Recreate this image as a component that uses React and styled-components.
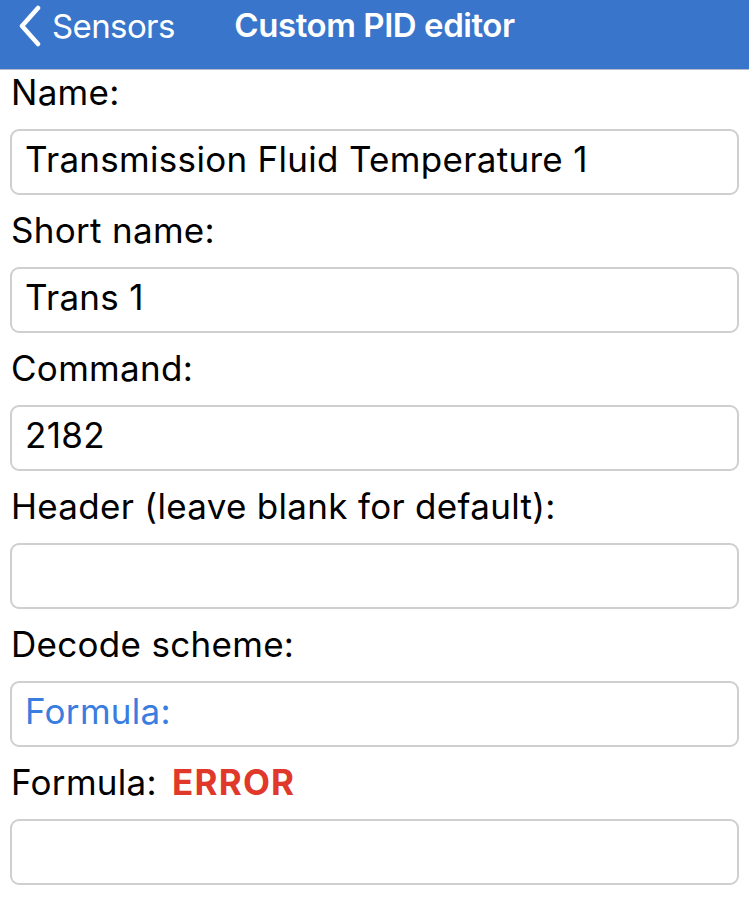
import React from "react";
import styled, { createGlobalStyle } from "styled-components";

const Global = createGlobalStyle`
  html, body { margin: 0; padding: 0; background: #ffffff; }
  body { font-family: Inter, "Noto Sans", sans-serif; -webkit-font-smoothing: antialiased; }
  * { box-sizing: border-box; }
`;

const Page = styled.div`
  width: 749px;
  min-height: 901px;
  background: #ffffff;
`;

const NavBar = styled.header`
  height: 70px;
  background: #3a75cc;
  border-bottom: 1px solid #b4bccb;
  display: grid;
  grid-template-columns: 1fr auto 1fr;
  align-items: start;
  padding-top: 5px;
  color: #ffffff;
`;

const Back = styled.div`
  display: flex;
  align-items: center;
  gap: 9px;
  padding-left: 17px;
  font-size: 33px;
  line-height: 41px;
  font-weight: 400;
  letter-spacing: -0.6px;
`;

const Chevron = styled.svg`
  width: 26px;
  height: 42px;
  display: block;
`;

const Title = styled.h1`
  margin: 0;
  font-size: 33px;
  line-height: 41px;
  font-weight: 600;
  letter-spacing: -0.45px;
`;

const Form = styled.div`
  display: flex;
  flex-direction: column;
  gap: 15px;
  padding: 2px 10px 0 10px;
`;

const Field = styled.div`
  display: flex;
  flex-direction: column;
  gap: 16px;
`;

const Label = styled.label`
  display: block;
  padding-left: 1px;
  font-size: 35px;
  line-height: 41px;
  color: #000000;
  letter-spacing: 0.3px;
  white-space: pre;
`;

const ErrorTag = styled.span`
  color: #e0392b;
  font-weight: 700;
  margin-left: 5px;
  letter-spacing: 1.2px;
`;

const Box = styled.div`
  width: 729px;
  height: 66px;
  border: 2px solid #cfcfcf;
  border-radius: 9px;
  padding: 8px 14px 0 13px;
  font-size: 35px;
  line-height: 41px;
  color: ${(p) => (p.$accent ? "#3a7de0" : "#000000")};
  letter-spacing: 0.3px;
  white-space: nowrap;
`;

const fields = [
  { label: "Name:", value: "Transmission Fluid Temperature 1" },
  { label: "Short name:", value: "Trans 1" },
  { label: "Command:", value: "2182" },
  { label: "Header (leave blank for default):", value: "" },
  { label: "Decode scheme:", value: "Formula:", accent: true },
  { label: "Formula: ", value: "", error: "ERROR" },
];

export default function App() {
  return (
    <Page>
      <Global />
      <NavBar>
        <Back>
          <Chevron viewBox="0 0 26 42" fill="none">
            <path d="M21 3 L5 21 L21 39" stroke="#ffffff" strokeWidth="4.5" strokeLinecap="round" strokeLinejoin="round" />
          </Chevron>
          Sensors
        </Back>
        <Title>Custom PID editor</Title>
        <div />
      </NavBar>
      <Form>
        {fields.map((f) => (
          <Field key={f.label + f.value}>
            <Label>
              {f.label}
              {f.error && <ErrorTag>{f.error}</ErrorTag>}
            </Label>
            <Box $accent={f.accent}>{f.value}</Box>
          </Field>
        ))}
      </Form>
    </Page>
  );
}
